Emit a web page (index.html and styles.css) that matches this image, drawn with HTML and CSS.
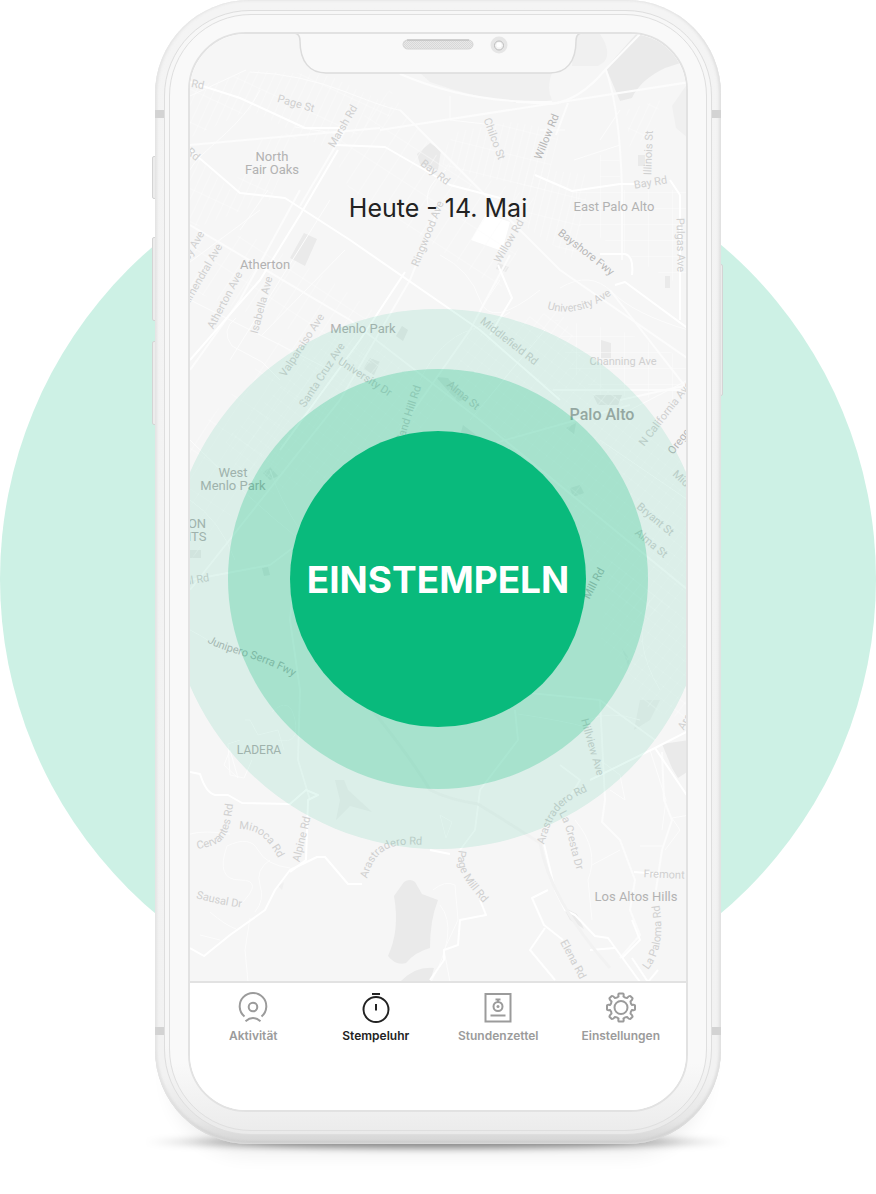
FILE: index.html
```html
<!DOCTYPE html>
<html lang="de">
<head>
<meta charset="utf-8">
<meta name="viewport" content="width=device-width, initial-scale=1">
<title>Stempeluhr</title>
<link rel="stylesheet" href="styles.css">
</head>
<body>
<main class="stage">
  <div class="stage__disc"></div>
  <div class="phone">
    <span class="key key--mute"></span>
    <span class="key key--up"></span>
    <span class="key key--down"></span>
    <span class="key key--power"></span>
    <span class="band band--top"></span>
    <span class="band band--bottom"></span>
    <div class="phone__rim">
      <div class="phone__face">
        <div class="screen">
          <section class="clock">
            <svg class="map" viewBox="190 34 496 947" preserveAspectRatio="xMidYMid slice" aria-hidden="true">
              <defs>
                <pattern id="g1" width="8" height="30" patternUnits="userSpaceOnUse" patternTransform="rotate(25)"><path class="lane" d="M0 0V30M0 0H8"/></pattern>
                <pattern id="g2" width="9" height="11" patternUnits="userSpaceOnUse" patternTransform="rotate(38)"><path class="lane" d="M0 0V11M0 0H9"/></pattern>
                <pattern id="g3" width="7" height="26" patternUnits="userSpaceOnUse" patternTransform="rotate(14)"><path class="lane" d="M0 0V26M0 0H7"/></pattern>
                <pattern id="g4" width="24" height="16" patternUnits="userSpaceOnUse"><path class="lane" d="M0 0V16M0 0H24"/></pattern>
                <pattern id="g5" width="15" height="34" patternUnits="userSpaceOnUse" patternTransform="rotate(33)"><path class="lane" d="M0 0V34M0 0H15"/></pattern>
                <path id="uni" d="M547 309Q582 320 620 288"/>
                <path id="jun" d="M207 642C228 655 262 656 306 684"/>
                <path id="ara1" d="M367 879C374 852 386 842 424 845"/>
                <path id="ara2" d="M544 845C552 815 558 804 590 790"/>
                <path id="cer" d="M197 849C224 845 229 838 233 804"/>
                <path id="min" d="M239 829C258 829 268 838 280 862"/>
                <path id="sau" d="M196 898Q215 904 244 908"/>
                <path id="pag" d="M459 850C455 868 464 882 488 908"/>
                <path id="cre" d="M559 813C569 830 568 846 580 880"/>
                <path id="pal" d="M648 970C662 952 664 930 658 896"/>
              </defs>
              <g class="zone">
                <path d="M420 73H552Q546 88 552 100L530 104Q480 100 430 82Z"/>
                <path d="M576 34H600Q612 52 604 62L598 66H572Z"/>
                <path class="zone--deep" d="M636 34H665L690 60L665 68Q640 80 632 98L620 101L606 68Z"/>
                <path d="M690 80L672 106L676 128L690 140Z"/>
                <path class="zone--deep" d="M417 154L430 143L441 150L438 170L420 164Z"/>
                <path class="zone--deep" d="M304 233L317 239L305 266L290 258Z"/>
                <path class="zone--deep" d="M638 155H645V166H638ZM665 276H670V288H665ZM498 263L509 267L506 272L496 269Z"/>
                <path class="zone--deep" d="M601 340L611 343V358H601ZM593 395H622L618 405H598Z"/>
                <path class="zone--deep" d="M370 358L380 362L374 375L363 369ZM402 326L408 330L403 341L396 336Z"/>
                <path class="zone--deep" d="M436 377L448 378L466 398L458 402ZM463 425L480 438L460 436ZM566 428L576 423L574 434ZM570 488L580 485L584 493L573 497Z"/>
                <path class="zone--deep" d="M263 473L270 467L278 476L270 480ZM190 550H201V558H190ZM262 568L268 567L270 575L264 576Z"/>
                <path d="M335 780H344L348 790L372 812L350 806L336 820L340 800Z"/>
                <path class="zone--deep" d="M404 882Q410 878 415 882L422 894L438 900Q430 920 430 948Q415 952 406 963Q396 966 388 956Q400 930 394 896Z"/>
                <path class="zone--deep" d="M400 982Q415 966 434 968L430 982Z"/>
                <path class="zone--deep" d="M662 744L690 740V770L678 778L672 768Z"/>
                <path class="zone--deep" d="M563 907L577 914L584 929L570 920Z"/>
                <path d="M622 648L630 660L628 666ZM640 700H660L650 720L634 730ZM278 886L284 882L282 890Z"/>
              </g>
              <path class="lot" d="M486 214L510 222L502 251L471 240Z"/>
              <g>
                <path fill="url(#g1)" d="M190 88L255 70L330 76L400 110L330 150L250 110L190 138Z"/>
                <path fill="url(#g1)" d="M190 150L230 190L260 140L300 130L270 200L190 230Z"/>
                <path fill="url(#g3)" d="M455 132L510 122L560 130L545 190L450 170L438 160Z"/>
                <path fill="url(#g3)" d="M530 168L590 175L575 260L500 210Z"/>
                <path fill="url(#g4)" d="M600 155H620V190H688V290L640 262L580 225L572 190H600Z"/>
                <path fill="url(#g1)" d="M626 110L660 100L655 130L630 150Z"/>
                <path fill="url(#g5)" d="M190 240L250 235L330 280L400 330L340 400L190 560V440L290 330L190 290Z"/>
                <path fill="url(#g2)" d="M340 330L450 390L420 430L330 480L250 500L225 440Z"/>
                <path fill="url(#g2)" d="M470 330L560 310L590 370L688 470V600L640 620L540 520L560 470L440 400Z"/>
                <path fill="url(#g4)" d="M555 320L620 330L688 360V400L600 395L570 370Z"/>
                <path fill="url(#g2)" d="M610 560L688 620V720L650 710L600 640Z"/>
                <path fill="url(#g5)" d="M390 90L440 160L540 200L500 290L350 190L330 150Z"/>
              </g>
              <g class="road">
                <path d="M190 96L246 70M295 127L340 134M240 230L268 190M190 170C200 150 240 130 260 90M250 72Q300 74 346 92T400 110"/>
                <path d="M190 262L260 210M262 335L345 250M230 360L330 200M190 300L330 370M236 318Q220 330 232 346L262 362L280 380"/>
                <path d="M450 96V120L485 124M540 130L565 130M574 160L620 145M620 110L600 140M446 170Q420 190 430 210"/>
                <path d="M440 255Q470 270 480 300T540 290M560 288Q590 270 612 292T688 330M500 280L480 310M545 330L470 420"/>
                <path d="M420 380Q440 340 470 330T510 312M630 410L688 380M600 440L688 500M650 600Q630 640 660 690"/>
                <path d="M190 440Q250 500 300 540M270 470Q280 500 300 530M190 500Q220 520 235 560M190 630Q210 640 220 650"/>
                <path d="M245 720H250L258 735L278 730L284 750M240 740L228 744L230 775L244 778L252 760M224 765L238 778L230 750ZM272 712Q290 695 295 720T278 740"/>
                <path d="M190 834Q205 830 230 834M227 846Q250 835 258 850T290 868M227 846Q215 880 240 880T240 905M270 860Q255 870 260 885T255 912M210 912Q225 925 236 929M250 918L245 950L248 982M200 935L220 940"/>
                <path d="M430 984Q460 930 440 905M433 890Q445 880 455 885L458 920L444 950L450 982M440 815L452 822L446 838Z"/>
                <path d="M575 820Q600 850 588 880L592 920M592 865L620 850M600 760L620 775L625 800L610 790M650 750L666 800L662 830"/>
                <path d="M690 815L672 818L680 830L665 850M640 846L664 846M588 720Q610 710 640 720M518 714Q560 720 590 728"/>
              </g>
              <g class="road road--mid">
                <path d="M516 102L552 104Q580 100 605 70L640 34M606 70Q620 110 622 190V260"/>
                <path d="M400 74Q470 104 552 102M380 130L690 82M190 145L380 128M400 110L560 270L690 360"/>
                <path d="M190 225L350 320L480 420L688 590M345 130L300 206M300 190L240 300L190 370"/>
                <path d="M510 255L470 330L400 430M440 205L410 280L340 400L190 590"/>
                <path d="M568 103L556 135M553 390H688M610 290L688 390M630 405L470 450M620 400L688 385"/>
                <path d="M190 580L270 565L330 520M296 560L290 620L300 690L298 760L310 800"/>
                <path d="M440 700L500 690L600 700L655 740M515 710L518 740L480 790L475 830L460 850M560 765L580 780L568 800"/>
                <path d="M600 700L605 800L602 822L620 840L635 880L630 910L640 935L620 958"/>
                <path d="M662 752L664 800L672 820L662 850L656 890"/>
              </g>
              <g class="road road--big">
                <path d="M190 82L240 98L305 128L340 128M336 145L385 147L425 170L450 185L500 198"/>
                <path d="M190 150L240 193L285 198L350 240L480 330L560 400M490 335L512 298L498 265M535 175L572 191L620 184"/>
                <path d="M338 150L300 215L260 280L190 360M405 272L360 340L280 450M600 254H625Q634 256 632 275"/>
                <path d="M620 184H640M670 180L680 195V320M615 285L625 282L690 330"/>
                <path d="M190 772L200 774Q206 793 215 795H228L242 803L290 804L306 790L318 795L308 800L306 860L290 872"/>
                <path d="M190 948L204 956L230 935L265 910L275 890L290 870L317 857H325L348 884H362"/>
                <path d="M430 850L450 854M480 900L486 915L460 920L458 945L444 950V960L430 980"/>
                <path d="M544 844L555 890L565 910L575 915L595 936L608 938L640 982M632 958L648 982L658 970M622 958L640 940L632 920"/>
                <path d="M548 890L532 898L544 925L563 940M545 928L530 950L555 980M590 950L615 948"/>
                <path d="M590 780L655 748L690 730M655 748L690 800M634 872L660 874"/>
              </g>
              <g class="road road--fwy">
                <path d="M478 804Q520 830 540 843Q550 900 610 968M330 660Q400 740 430 790Q450 800 478 804"/>
              </g>
              <g class="place">
                <text x="272" y="161">North</text><text x="272" y="174">Fair Oaks</text>
                <text x="265" y="269">Atherton</text><text x="363" y="333">Menlo Park</text>
                <text x="233" y="477">West</text><text x="233" y="490">Menlo Park</text>
                <text x="197" y="528">ON</text><text x="197" y="541">ITS</text>
                <text class="place--small" x="259" y="754">LADERA</text><text x="636" y="901">Los Altos Hills</text>
                <text x="614" y="211">East Palo Alto</text>
                <text class="place--city" x="602" y="420">Palo Alto</text>
              </g>
              <g class="street">
                <text transform="translate(197 88) rotate(12)">Rd</text>
                <text transform="translate(191 157) rotate(40)">Rd</text>
                <text transform="translate(295 107) rotate(16)">Page St</text>
                <text transform="translate(346 128) rotate(-60)">Marsh Rd</text>
                <text transform="translate(491 140) rotate(70)">Chilco St</text>
                <text transform="translate(652 153) rotate(-88)">Illinois St</text>
                <text transform="translate(433 175) rotate(38)">Bay Rd</text>
                <text transform="translate(651 186) rotate(-9)">Bay Rd</text>
                <text transform="translate(431 235) rotate(-68)">Ringwood Ave</text>
                <text transform="translate(512 243) rotate(-60)">Willow Rd</text>
                <text transform="translate(677 245) rotate(89)">Pulgas Ave</text>
                <text transform="translate(623 365)">Channing Ave</text>
                <text transform="translate(193 254) rotate(-60)">Selby Ave</text>
                <text transform="translate(205 277) rotate(-60)">Almendral Ave</text>
                <text transform="translate(228 302) rotate(-62)">Atherton Ave</text>
                <text transform="translate(265 306) rotate(-75)">Isabella Ave</text>
                <text transform="translate(305 347) rotate(-57)">Valparaiso Ave</text>
                <text transform="translate(325 377) rotate(-57)">Santa Cruz Ave</text>
                <text transform="translate(363 380) rotate(33)">University Dr</text>
                <text transform="translate(507 344) rotate(38)">Middlefield Rd</text>
                <text transform="translate(461 398) rotate(40)">Alma St</text>
                <text transform="translate(412 415) rotate(-72)">Sand Hill Rd</text>
                <text transform="translate(668 416) rotate(-52)">N California Ave</text>
                <text transform="translate(692 493) rotate(42)">Middlefield</text>
                <text transform="translate(653 522) rotate(40)">Bryant St</text>
                <text transform="translate(649 546) rotate(40)">Alma St</text>
                <text transform="translate(198 583) rotate(-9)">ill Rd</text>
                <text transform="translate(589 748) rotate(74)">Hillview Ave</text>
                <text transform="translate(305 840) rotate(-76)">Alpine Rd</text>
                <text transform="translate(570 961) rotate(62)">Elena Rd</text>
                <text transform="translate(664 878) rotate(2)">Fremont</text>
                <text transform="translate(698 706) rotate(-60)">Arastradero</text>
              </g>
              <g class="street street--curve">
                <text><textPath href="#uni">University Ave</textPath></text>
                <text><textPath href="#ara1">Arastradero Rd</textPath></text>
                <text><textPath href="#ara2">Arastradero Rd</textPath></text>
                <text><textPath href="#cer">Cervantes Rd</textPath></text>
                <text><textPath href="#min">Minoca Rd</textPath></text>
                <text><textPath href="#sau">Sausal Dr</textPath></text>
                <text><textPath href="#pag">Page Mill Rd</textPath></text>
                <text><textPath href="#cre">La Cresta Dr</textPath></text>
                <text><textPath href="#pal">La Paloma Rd</textPath></text>
              </g>
              <g class="street street--major">
                <text transform="translate(550 138) rotate(-68)">Willow Rd</text>
                <text transform="translate(584 255) rotate(38)">Bayshore Fwy</text>
                <text transform="translate(684 441) rotate(-52)">Oregon</text>
                <text transform="translate(597 585) rotate(-62)">Mill Rd</text>
              </g>
              <g class="street street--major street--curve">
                <text><textPath href="#jun">Junipero Serra Fwy</textPath></text>
              </g>
            </svg>
            <h1 class="clock__date">Heute - 14. Mai</h1>
            <button class="clock__punch" type="button">EINSTEMPELN</button>
          </section>
          <nav class="tabs" aria-label="Hauptnavigation">
            <a class="tab" href="#aktivitaet">
              <svg class="tab__icon" viewBox="0 0 32 32" aria-hidden="true"><path d="M7.500 25.500A13.300 13.300 0 1 1 24.500 25.500M8.500 30.200Q16 23.800 23.500 30.200"/><circle cx="16" cy="16" r="4.300"/></svg>
              <span>Aktivität</span>
            </a>
            <a class="tab tab--active" href="#stempeluhr" aria-current="page">
              <svg class="tab__icon" viewBox="0 0 32 32" aria-hidden="true"><circle cx="16" cy="18.500" r="12.500"/><path d="M12 3H20M16 13V19.500"/></svg>
              <span>Stempeluhr</span>
            </a>
            <a class="tab" href="#stundenzettel">
              <svg class="tab__icon" viewBox="0 0 32 32" aria-hidden="true"><path d="M3.500 3H28.500V30.500H3.500ZM8.500 24.500H23.500M13.500 8.500H18.500M16 8V11"/><circle cx="16" cy="15.500" r="4.500"/><circle class="dot" cx="16" cy="15.500" r="1.500"/></svg>
              <span>Stundenzettel</span>
            </a>
            <a class="tab" href="#einstellungen">
              <svg class="tab__icon" viewBox="0 0 32 32" aria-hidden="true"><circle cx="16" cy="16.500" r="6.500"/><path d="M13.500 5.500Q13 2.500 14 2.500H18Q19 2.500 18.500 5.500Q20 7 22 7Q24.500 4.500 25.300 5L27.500 7.200Q28 8 25.500 10.500Q25.500 12.500 27 14Q30 13.500 30 14.500V18.500Q30 19.500 27 19Q25.500 20.500 25.500 22.500Q28 25 27.500 25.800L25.300 28Q24.500 28.500 22 26Q20 26 18.500 27.500Q19 30.500 18 30.500H14Q13 30.500 13.500 27.500Q12 26 10 26Q7.500 28.500 6.700 28L4.500 25.800Q4 25 6.500 22.500Q6.500 20.500 5 19Q2 19.500 2 18.500V14.500Q2 13.500 5 14Q6.500 12.500 6.500 10.500Q4 8 4.500 7.200L6.700 5Q7.500 4.500 10 7Q12 7 13.500 5.500Z"/></svg>
              <span>Einstellungen</span>
            </a>
          </nav>
          <svg class="notch" viewBox="0 0 300 44" aria-hidden="true">
            <defs>
              <pattern id="mesh" width="2" height="2" patternUnits="userSpaceOnUse"><path fill="#e8e8e8" d="M0 0H2V2H0Z"/><path fill="#d8d8d8" d="M0 0H1V1H0ZM1 1H2V2H1Z"/></pattern>
            </defs>
            <path class="notch__fill" d="M0 0H300V2H294Q288 2 288 9C288 30 278 41 262 41H38C22 41 12 30 12 9Q12 2 6 2H0Z"/>
            <path class="notch__edge" d="M4 1H5Q12 1 12 9C12 30 22 41 38 41H262C278 41 288 30 288 9Q288 1 295 1H296"/>
            <rect x="115" y="8" width="70" height="9" rx="4.500" fill="url(#mesh)" stroke="#d6d6d6"/>
            <path d="M119 8H181" stroke="#b8b8b8"/>
            <circle cx="211" cy="13" r="8.500" fill="#e6e6e6"/>
            <circle cx="211" cy="13.500" r="4.500" fill="#f4f4f4" stroke="#bcbcbc"/>
            <circle cx="211" cy="13" r="2.500" fill="#fff"/>
          </svg>
        </div>
      </div>
    </div>
  </div>
</main>
</body>
</html>
```
FILE: styles.css
```css
* {
  box-sizing: border-box;
}

body {
  margin: 0;
  background: #fff;
  color: #222;
  font-family: Inter, "Open Sans", sans-serif;
}

.stage {
  position: relative;
  isolation: isolate;
  display: flex;
  justify-content: center;
  align-items: flex-start;
  min-height: 100vh;
  padding-bottom: 50px;
  overflow: hidden;
}

/* Mint disc behind the device */
.stage__disc {
  position: absolute;
  z-index: -2;
  top: 141px;
  left: 50%;
  width: 876px;
  aspect-ratio: 1;
  border-radius: 50%;
  background: #cdf1e5;
  transform: translateX(-50%);
}

/* Device */
.phone {
  position: relative;
  flex: 0 1 566px;
  min-width: 0;
  padding: 10px 9px 9px;
  border-radius: 94px;
  background: linear-gradient(#f4f4f4, #f2f2f2 94%, #e6e6e6 98%, #d4d4d4);
  box-shadow:
    inset 2px 0 3px #e6e6e6,
    inset -2px 0 3px #e2e2e2,
    inset 0 -2px 3px #c4c4c4,
    0 26px 20px -16px rgb(0 0 0 / 7%);
}

/* Contact shadow on the ground */
.phone::before {
  content: "";
  position: absolute;
  z-index: -1;
  right: -12px;
  bottom: -6px;
  left: -12px;
  height: 16px;
  background: radial-gradient(closest-side, rgb(0 0 0 / 42%) 60%, rgb(0 0 0 / 16%) 84%, transparent);
  filter: blur(3px);
}

.phone__rim {
  padding: 3px 4px;
  border: 1px solid #dedede;
  border-radius: 86px;
  background: linear-gradient(#f7f7f7 92%, #eaeaea);
}

.phone__face {
  padding: 17px 18px 18px;
  border: 1px solid #dfdfdf;
  border-radius: 82px;
  background: linear-gradient(#f9f9f9 94%, #ececec);
}

.key {
  position: absolute;
  z-index: -1;
  left: -3px;
  width: 6px;
  border: 1px solid #d4d4d4;
  border-radius: 2px;
  background: #ececec;
}

.key--mute {
  top: 156px;
  height: 43px;
}

.key--up {
  top: 237px;
  height: 84px;
}

.key--down {
  top: 341px;
  height: 84px;
}

.key--power {
  top: 264px;
  right: -2px;
  left: auto;
  height: 132px;
}

.band {
  position: absolute;
  right: 0;
  left: 0;
  height: 8px;
  border: solid #d3d3d3;
  border-width: 0 9px;
}

.band--top {
  top: 110px;
}

.band--bottom {
  bottom: 109px;
}

.screen {
  position: relative;
  overflow: hidden;
  border: 2px solid #e2e2e2;
  border-radius: 58px;
  background: #fff;
}

.notch {
  position: absolute;
  top: -2px;
  left: 50%;
  width: 300px;
  height: 44px;
  transform: translateX(-50%);
}

.notch__fill {
  fill: #f9f9f9;
}

.notch__edge {
  fill: none;
  stroke: #dcdcdc;
  stroke-width: 1.500;
}

/* Clock screen */
.clock {
  position: relative;
  isolation: isolate;
  display: flex;
  flex-direction: column;
  align-items: center;
  padding: 159px 0 254px;
  overflow: hidden;
}

.clock__date {
  margin: 0 0 208px;
  color: #222;
  font-size: 25px;
  font-weight: 400;
  line-height: 30px;
}

.clock__punch {
  width: 296px;
  height: 296px;
  padding: 0;
  border: 0;
  border-radius: 50%;
  background: #09ba7c;
  box-shadow: 0 0 0 62px rgb(9 186 124 / 25%), 0 0 0 122px rgb(9 186 124 / 11%);
  color: #fff;
  font-family: inherit;
  font-size: 37px;
  font-weight: 700;
  white-space: nowrap;
  cursor: pointer;
}

/* Map */
.map {
  position: absolute;
  z-index: -1;
  inset: 0;
  width: 100%;
  height: 100%;
  background: #f6f6f6;
}

.lane {
  fill: none;
  stroke: #fcfcfc;
  stroke-width: 1;
}

.zone {
  fill: #f0f0f0;
}

.zone--deep {
  fill: #eaeaea;
}

.lot {
  fill: #fff;
}

.road {
  fill: none;
  stroke: #fcfcfc;
  stroke-width: 1;
  stroke-linejoin: round;
}

.road--mid {
  stroke: #fcfcfc;
  stroke-width: 2;
}

.road--big {
  stroke: #fff;
  stroke-width: 2;
}

.road--fwy {
  stroke: #f2f2f2;
  stroke-width: 3;
}

.place {
  fill: #b2b2b2;
  font: 400 13px Roboto, sans-serif;
  text-anchor: middle;
}

.place--small {
  font-size: 12px;
}

.place--city {
  fill: #a6a6a6;
  font-size: 16px;
  font-weight: 500;
}

.street {
  fill: #d0d0d0;
  font: 400 11px Roboto, sans-serif;
  text-anchor: middle;
}

.street--major {
  fill: #b8b8b8;
}

.street--curve {
  text-anchor: start;
}

/* Tab bar */
.tabs {
  display: grid;
  grid-template-columns: repeat(4, 1fr);
  min-height: 129px;
  padding: 8px 4px 0 2px;
  border-top: 2px solid #e2e2e2;
  background: #fff;
}

.tab {
  display: flex;
  flex-direction: column;
  align-items: center;
  align-self: start;
  gap: 5px;
  color: #9b9b9b;
  font-size: 12px;
  font-weight: 600;
  line-height: 16px;
  text-decoration: none;
}

.tab--active {
  color: #222;
}

.tab__icon {
  width: 32px;
  height: 32px;
  fill: none;
  stroke: currentColor;
  stroke-width: 2;
}

.dot {
  fill: currentColor;
  stroke: none;
}
```
